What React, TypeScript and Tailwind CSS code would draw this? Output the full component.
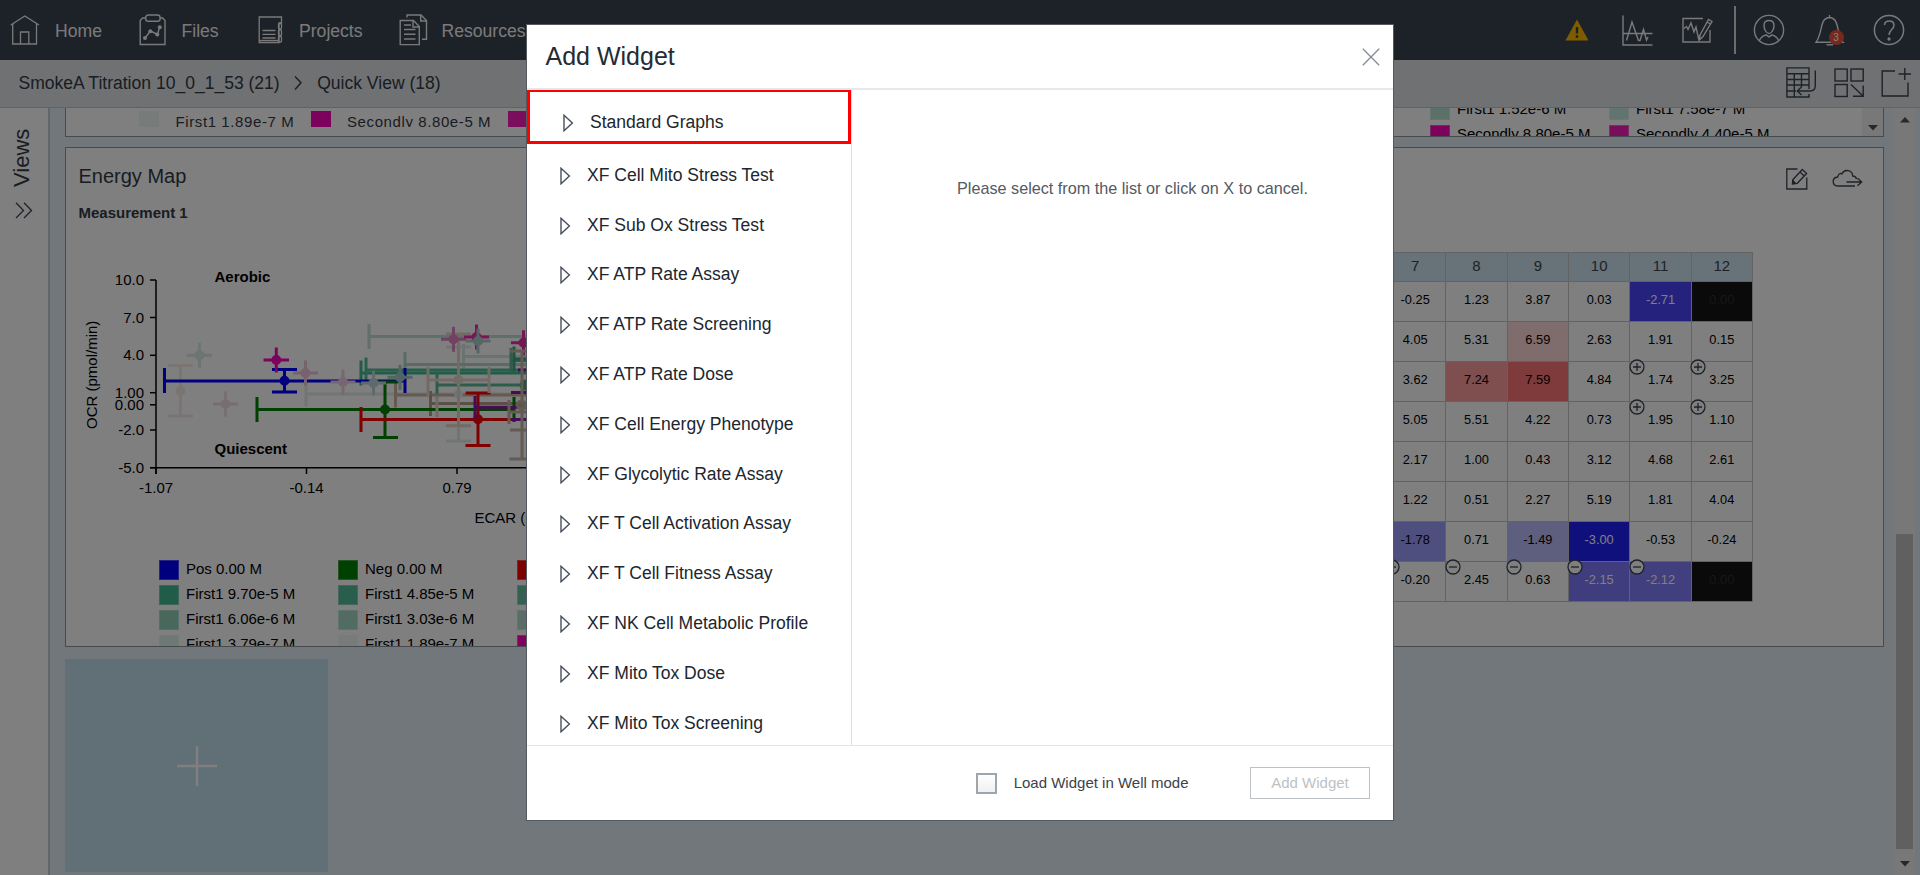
import React from "react";

const NAV_STROKE = "#f4f4f4";
const INK = "#3c4450";

function HomeIcon() {
  return (
    <svg width="30" height="30" viewBox="0 0 30 30" fill="none" stroke={NAV_STROKE} strokeWidth="1.3">
      <path d="M0.8 10 L14.8 1 L29 10" />
      <path d="M2.7 9 V29 H26.5 V9" />
      <path d="M10.5 29 V17 H18.8 V29" />
    </svg>
  );
}

function FilesIcon() {
  return (
    <svg width="28" height="32" viewBox="0 0 28 32" fill="none" stroke={NAV_STROKE} strokeWidth="1.4">
      <path d="M6.5 4 H3.5 L1.2 6.5 V30.5 H26 V6.5 L23.7 4 H21.2" />
      <rect x="6.7" y="1" width="14.4" height="6.3" rx="2.6" />
      <path d="M6 24 L11.5 17 L18.5 20.5 L20.5 13.5" />
      <g fill={NAV_STROKE} stroke="none">
        <circle cx="6" cy="24" r="2" />
        <circle cx="11.3" cy="17.2" r="2" />
        <circle cx="18.3" cy="20.5" r="2" />
        <circle cx="20.8" cy="13.2" r="2" />
      </g>
    </svg>
  );
}

function ProjectsIcon() {
  return (
    <svg width="25" height="28" viewBox="0 0 25 28" fill="none" stroke={NAV_STROKE} strokeWidth="1.3">
      <path d="M21 26.5 H1.2 V1 H23.5 V7 H21 V26.5 Z" />
      <path d="M1 24.5 H20" />
      <path d="M4.5 14.5 H17.5 M4.5 18.3 H17.5 M4.5 22 H17.5" />
      <rect x="20.5" y="7.5" width="3" height="5.5" rx="1" />
      <rect x="20.5" y="14" width="3" height="5.5" rx="1" />
      <rect x="20.5" y="20.5" width="3" height="5.5" rx="1" />
    </svg>
  );
}

function ResourcesIcon() {
  return (
    <svg width="29" height="32" viewBox="0 0 29 32" fill="none" stroke={NAV_STROKE} strokeWidth="1.4">
      <path d="M1.2 6.5 H14.5 L20.3 12.5 V30.6 H1.2 Z" />
      <path d="M14 6.5 V13 H20.3" />
      <path d="M5 11 H12 M5 15.5 H16.5 M5 20.3 H16.5 M5 25 H16.5" />
      <path d="M8 3.5 V1 H22 L27.5 6.5 V25.3 H23" />
      <path d="M21.7 1 V7 H27.5" />
    </svg>
  );
}

function SubTableIcon() {
  return (
    <svg width="31" height="31" viewBox="0 0 31 31" fill="none" stroke={INK} strokeWidth="1.4">
      <path d="M23 22 V0.9 H0.9 V30 H23 V27" />
      <path d="M1 6.8 H23 M1 12.5 H23 M1 18 H23 M1 24 H10 M8.3 7 V30 M15.5 7 V20" />
      <path d="M29.3 3.5 V18.5 C29.3 22.5 27.5 24 24 24 H11.5" />
      <path d="M15.5 20 L11.3 24 L15.5 28" />
    </svg>
  );
}

function SubGridIcon() {
  return (
    <svg width="31" height="30" viewBox="0 0 31 30" fill="none" stroke={INK} strokeWidth="1.4">
      <rect x="1" y="1" width="12.2" height="12" />
      <rect x="17" y="1" width="12.2" height="12" />
      <rect x="1" y="16.5" width="12.2" height="12" />
      <path d="M17 16.5 L29 28 M29.2 17.5 V28.3 H19" />
    </svg>
  );
}

function SubAddIcon() {
  return (
    <svg width="31" height="31" viewBox="0 0 31 31" fill="none" stroke={INK} strokeWidth="1.4">
      <path d="M14 4 H1.2 V29 H27 V15.5" />
      <path d="M23.8 1 V13 M17.5 7 H30" />
    </svg>
  );
}

const Y_TICKS: [string, number][] = [
  ["10.0", 280],
  ["7.0", 317.5],
  ["4.0", 355.3],
  ["1.00", 392.7],
  ["0.00", 404.8],
  ["-2.0", 430],
  ["-5.0", 467.7],
];
const X_TICKS: [string, number][] = [
  ["-1.07", 156],
  ["-0.14", 306.5],
  ["0.79", 457],
];

// Horizontal error bars that run off to the right: left cap x, y, colour.
const BARS: [number, number, string][] = [
  [306, 394, "#e2ebe8"],
  [369, 336.5, "#bfe0d6"],
  [463.5, 356.5, "#d3e8e1"],
  [405, 364.5, "#b2d6c9"],
  [361, 373, "#41b88e"],
  [366, 370, "#52bd97"],
  [437, 385, "#5cb998"],
  [511, 360.5, "#5cb998"],
  [514, 359, "#41a884"],
  [395.5, 395, "#cbb3a0"],
  [430.5, 403.5, "#b8a08d"],
];

const CROSSES: [number, number, string][] = [
  [199.5, 355.3, "#dbe9e8"],
  [305.5, 373, "#ecc6df"],
  [343, 382, "#edcfe3"],
  [225.5, 404, "#eedde8"],
  [400, 377.3, "#a5c8c6"],
  [373.5, 383, "#bdd5d6"],
  [453.5, 339.3, "#e285c4"],
  [476.5, 337, "#ee2cae"],
  [478, 341, "#a9cdcc"],
  [523.5, 342.7, "#ee2cae"],
];

function EnergyMapChart() {
  return (
    <svg
      className="block"
      width="461"
      height="310"
      viewBox="66 235 461 310"
      fontFamily='"Liberation Sans", Arial, sans-serif'
      fontSize="15"
    >
      <g strokeWidth="3">
        {BARS.map(([x, y, color], i) => (
          <path key={i} stroke={color} fill="none" d={`M${x} ${y} H560 M${x} ${y - 12.5} V${y + 12.5}`} />
        ))}
        <g stroke="#f4ebe5">
          <path d="M180.5 365.5 V416 M168 365.5 H193 M168 416 H193" />
          <circle cx="180.5" cy="391" r="3.5" fill="#f4ebe5" />
        </g>
        <g stroke="#0000ff">
          <path fill="none" d="M164.5 381 H405 M164.5 368 V393 M405 368 V393 M284.5 369.5 V392 M272 369.5 H297 M272 392 H297" />
          <circle cx="284.5" cy="380.7" r="3.5" fill="#0000ff" />
        </g>
        <g stroke="#008000">
          <path fill="none" d="M257 409.5 H514 M257 397 V422 M514 397 V422 M385 382 V437.5 M373 382 H398 M373 437.5 H398" />
          <circle cx="385" cy="409.5" r="3.5" fill="#008000" />
        </g>
        <g stroke="#ff0000">
          <path fill="none" d="M361 419.5 H560 M361 407 V432 M478 393 V445.5 M465.5 393 H490.5 M465.5 445.5 H490.5" />
          <circle cx="478" cy="419.3" r="3.5" fill="#ff0000" />
        </g>
        <path stroke="#8b18a8" fill="none" d="M475 407.3 H560 M475 396 V420 M511 419.5 H540 M511 392.5 H540 M518 370 H540" />
        <g stroke="#dfeae8">
          <path fill="none" d="M458.5 347 V441 M446 347 H471 M446 441 H471" />
          <circle cx="458.5" cy="394" r="3" fill="#dfeae8" />
        </g>
        <g stroke="#e2d7cd">
          <path fill="none" d="M458.5 334 V426 M446 334 H471 M446 425.7 H471 M428 380 H489 M428 367 V396 M489 367 V393 M437 396 V417" />
          <circle cx="458.5" cy="380" r="3.5" fill="#e2d7cd" />
        </g>
        {CROSSES.map(([x, y, color], i) => (
          <g key={i} stroke={color}>
            <path d={`M${x - 12.5} ${y} H${x + 12.5} M${x} ${y - 12.5} V${y + 12.5}`} />
            <circle cx={x} cy={y} r="3.5" fill={color} />
          </g>
        ))}
        <g stroke="#fa04bc">
          <path d="M263.5 360 H289 M276.3 347.5 V372.5" />
          <circle cx="276.3" cy="360" r="3.5" fill="#fa04bc" />
        </g>
        <circle cx="525" cy="385" r="4" fill="#4ba585" stroke="#4ba585" />
        <g stroke="#c4b4a6">
          <path fill="none" d="M522 351 V459 M510 351 H540 M510 430 H540 M509.5 459 H540 M509 400 V424 M509 412 H530" />
          <circle cx="521.5" cy="405" r="4" fill="#b8a898" />
        </g>
      </g>
      <g stroke="#000" strokeWidth="1.5">
        <path d="M156 280 V474 M150 467.7 H560" />
        {Y_TICKS.map(([t, y]) => (
          <path key={t} d={`M150 ${y} H156`} />
        ))}
        {X_TICKS.map(([t, x]) => (
          <path key={t} d={`M${x} 467.7 V474`} />
        ))}
      </g>
      <g fill="#000">
        {Y_TICKS.map(([t, y]) => (
          <text key={t} x="144" y={y + 5} textAnchor="end">
            {t}
          </text>
        ))}
        {X_TICKS.map(([t, x]) => (
          <text key={t} x={x} y="493" textAnchor="middle">
            {t}
          </text>
        ))}
        <text x="214.5" y="282" fontWeight="bold">
          Aerobic
        </text>
        <text x="214.5" y="454" fontWeight="bold">
          Quiescent
        </text>
        <text x="474.5" y="523">
          ECAR (mpH/min)
        </text>
        <text transform="translate(97 429) rotate(-90)">OCR (pmol/min)</text>
      </g>
    </svg>
  );
}

const LEGEND: [string, string][] = [
  ["#0000ff", "Pos 0.00 M"],
  ["#008000", "Neg 0.00 M"],
  ["#ff0000", ""],
  ["#41b88e", "First1 9.70e-5 M"],
  ["#54bd98", "First1 4.85e-5 M"],
  ["#68c4a4", ""],
  ["#90d0b9", "First1 6.06e-6 M"],
  ["#a4d8c6", "First1 3.03e-6 M"],
  ["#b4dccf", ""],
  ["#dcf0ea", "First1 3.79e-7 M"],
  ["#eef7f4", "First1 1.89e-7 M"],
  ["#ff04c0", ""],
];

function Swatch({ color, label }: { color: string; label: string }) {
  return (
    <div className="flex h-[25px] items-start">
      <div className="size-[20px] shrink-0 border border-white/30" style={{ backgroundColor: color }} />
      <span className="ml-[7px] text-[15px] leading-[18px] whitespace-nowrap text-black">{label}</span>
    </div>
  );
}

type Cell = { v: string; bg?: string; fg?: string; mark?: "+" | "-" };
const c = (v: string, bg?: string, fg?: string): Cell => ({ v, bg, fg });
const m = (v: string, mark: "+" | "-", bg?: string, fg?: string): Cell => ({ v, mark, bg, fg });

const ROWS: Cell[][] = [
  [c("-0.25"), c("1.23"), c("3.87"), c("0.03"), c("-2.71", "#4844fa", "#fff"), c("0.00", "#141414", "#303030")],
  [c("4.05"), c("5.31"), c("6.59", "#ffd8d8"), c("2.63"), c("1.91"), c("0.15")],
  [c("3.62"), c("7.24", "#ff9c9c"), c("7.59", "#ff7676"), c("4.84"), m("1.74", "+"), m("3.25", "+")],
  [c("5.05"), c("5.51"), c("4.22"), c("0.73"), m("1.95", "+"), m("1.10", "+")],
  [c("2.17"), c("1.00"), c("0.43"), c("3.12"), c("4.68"), c("2.61")],
  [c("1.22"), c("0.51"), c("2.27"), c("5.19"), c("1.81"), c("4.04")],
  [c("-1.78", "#9c9cff"), c("0.71"), c("-1.49", "#bcbcff"), c("-3.00", "#2020fa", "#fff"), c("-0.53"), c("-0.24")],
  [
    m("-0.20", "-"),
    m("2.45", "-"),
    m("0.63", "-"),
    m("-2.15", "-", "#7e7afc", "#fff"),
    m("-2.12", "-", "#847efc", "#fff"),
    c("0.00", "#141414", "#303030"),
  ],
];

function PlateTable() {
  return (
    <div className="mr-[130px] w-[369px] border-t border-l border-[#c6c6c6]">
      <div className="grid grid-cols-6">
        {["7", "8", "9", "10", "11", "12"].map((h) => (
          <div
            key={h}
            className="flex h-[29px] items-center justify-center border-r border-b border-[#c6c6c6] bg-[#cfe6f0] pb-[2px] text-[15px] text-[#3c4450]"
          >
            {h}
          </div>
        ))}
        {ROWS.flat().map((cell, i) => (
          <div
            key={i}
            className="relative flex h-[40px] items-center justify-center border-r border-b border-[#c6c6c6] pb-[4px] text-[12.8px] text-black"
            style={{ backgroundColor: cell.bg, color: cell.fg }}
          >
            {cell.v}
            {cell.mark && (
              <svg className="absolute -top-[3px] -left-[1.5px]" width="16" height="16" viewBox="0 0 16 16" fill="none" stroke={INK} strokeWidth="1.3">
                <circle cx="8" cy="8" r="7" fill="#fff" />
                <path d={cell.mark === "+" ? "M4 8 H12 M8 4 V12" : "M4 8 H12"} />
              </svg>
            )}
          </div>
        ))}
      </div>
    </div>
  );
}

function TopBar() {
  return (
    <header className="flex h-[60px] shrink-0 items-center bg-[#3a4350] text-[17.6px] text-[#f4f4f4]">
      <nav className="flex items-center">
        <div className="flex w-[128px] items-center pl-[10px]">
          <HomeIcon />
          <span className="ml-[15px] pt-[3px]">Home</span>
        </div>
        <div className="flex w-[119px] items-center pl-[10.5px]">
          <FilesIcon />
          <span className="ml-[15px] pt-[3px]">Files</span>
        </div>
        <div className="flex w-[141px] items-center pl-[10.5px]">
          <ProjectsIcon />
          <span className="ml-[16.5px] pt-[3px]">Projects</span>
        </div>
        <div className="flex items-center pl-[10.5px]">
          <ResourcesIcon />
          <span className="ml-[14px] pt-[3px]">Resources</span>
        </div>
      </nav>
      <div className="ml-auto flex items-center pr-[15.5px]">
        <svg className="mr-[33px]" width="24" height="22" viewBox="0 0 24 22">
          <path d="M12 0.5 L23.5 21.5 H0.5 Z" fill="#ffb800" />
          <path d="M10.8 8 H13.2 V14.5 H10.8 Z M10.8 16.3 H13.2 V18.7 H10.8 Z" fill="#394050" />
        </svg>
        <svg className="mr-[29px]" width="31" height="31" viewBox="0 0 31 31" fill="none" stroke={NAV_STROKE} strokeWidth="1.4">
          <path d="M1 0.5 V30 H30.5 M1 18.5 H30.5" />
          <path d="M4.5 25.5 L10 7 L16.5 25.5 H18 L21.5 14.5 L24.5 25 L26 22" />
        </svg>
        <svg className="mr-[21px]" width="31" height="28" viewBox="0 0 31 28" fill="none" stroke={NAV_STROKE} strokeWidth="1.4">
          <path d="M21 2.5 H1 V26 H28 V14" />
          <path d="M2 12.5 L4.5 10.5 L6 13.5 L9 7 L12 16 L14 11 L16.5 22.5 L18 19" />
          <path d="M18 19 L26.5 3.5 L30 5.5 L21 20.5 L17.2 24 Z M25 6 L28.5 8" />
        </svg>
        <div className="mr-[17px] h-[48px] w-[2px] bg-[#d8d8d8]" />
        <svg className="mr-[29.5px]" width="32" height="32" viewBox="0 0 32 32" fill="none" stroke={NAV_STROKE} strokeWidth="1.4">
          <circle cx="16" cy="16" r="14.6" />
          <path d="M16 6.5 C12.5 6.5 11 9 11 11.5 C11 15.5 13.5 19.5 16 19.5 C18.5 19.5 21 15.5 21 11.5 C21 9 19.5 6.5 16 6.5 Z" />
          <path d="M6.5 26.5 C7.5 23 10 21.8 13 20.8 L16 22.8 L19 20.8 C22 21.8 24.5 23 25.5 26.5" />
        </svg>
        <div className="relative mr-[28px] h-[32px] w-[30px]">
          <svg width="30" height="32" viewBox="0 0 30 32" fill="none" stroke={NAV_STROKE} strokeWidth="1.4">
            <path d="M14.5 3.5 V1 M1 28.3 C3 26.5 3.5 23 5 19 C7 13 6.5 4 14.5 3.5 C22.5 4 22 13 24 19 C25.5 23 26 26.5 28 28.3 Z" />
            <path d="M11.5 30.8 H18" />
          </svg>
          <span className="absolute top-[16px] left-[14px] flex size-[15px] items-center justify-center rounded-full bg-[#f0533c] text-[10px] leading-none text-white">
            3
          </span>
        </div>
        <svg width="32" height="32" viewBox="0 0 32 32" fill="none" stroke={NAV_STROKE} strokeWidth="1.5">
          <circle cx="16" cy="16" r="14.6" />
          <path d="M11.5 11 C11.5 5.5 21 5.5 21 11.3 C21 15.5 16 15.5 16 21" />
          <circle cx="16" cy="25" r="0.9" fill={NAV_STROKE} />
        </svg>
      </div>
    </header>
  );
}

function SubBar() {
  return (
    <div className="flex h-[48px] shrink-0 items-center border-b border-[#c0c4c8] bg-[#dfe2e6] pl-[18.5px] text-[17.55px] text-[#323a46]">
      <span>SmokeA Titration 10_0_1_53 (21)</span>
      <svg className="mb-[2px] ml-[13.5px]" width="10" height="16" viewBox="0 0 10 16" fill="none" stroke={INK} strokeWidth="1.5">
        <path d="M2 1.5 L8 7.8 L2 14.5" />
      </svg>
      <span className="ml-[14px]">Quick View (18)</span>
      <div className="mb-[2px] ml-auto flex items-center gap-[16.5px] pr-[8px]">
        <SubTableIcon />
        <SubGridIcon />
        <SubAddIcon />
      </div>
    </div>
  );
}

function Sidebar() {
  return (
    <aside className="flex w-[50px] shrink-0 flex-col items-center border-r-2 border-[#c4cdd3] bg-white pt-[19px] pr-[5px]">
      <span className="h-[60px] rotate-180 text-[22px] leading-[26px] text-[#323a46] [writing-mode:vertical-rl]">Views</span>
      <svg className="mt-[15px] ml-[5px]" width="18" height="17" viewBox="0 0 18 17" fill="none" stroke={INK} strokeWidth="1.3">
        <path d="M1 0.8 L8.5 8.5 L1 16 M9 0.8 L16.5 8.5 L9 16" />
      </svg>
    </aside>
  );
}

function UpperPanel() {
  return (
    <section className="flex h-[29px] w-[1819px] shrink-0 overflow-hidden border-x border-b border-[#8e969c] bg-white">
      <div className="mt-[3px] ml-[73px] flex h-[16px] overflow-hidden text-[15px] leading-[21px] tracking-[0.6px] whitespace-nowrap text-[#323a46]">
        <div className="w-[20px] bg-[#eef7f4]" />
        <span className="ml-[16.5px] w-[135.5px]">First1 1.89e-7 M</span>
        <div className="w-[20px] bg-[#fa04bc]" />
        <span className="ml-[16px] w-[161px]">Secondly 8.80e-5 M</span>
        <div className="w-[20px] bg-[#f41cb8]" />
      </div>
      <div className="-mt-[8px] ml-auto grid grid-cols-[179px_179px]">
        <Swatch color="#b4e0d0" label="First1 1.52e-6 M" />
        <Swatch color="#c4e8dc" label="First1 7.58e-7 M" />
        <Swatch color="#fa04bc" label="Secondly 8.80e-5 M" />
        <Swatch color="#f41cb8" label="Secondly 4.40e-5 M" />
      </div>
      <div className="ml-[74px] flex w-[21px] justify-center bg-[#f1f1f1] pt-[17px]">
        <svg width="10" height="6" viewBox="0 0 10 6">
          <path d="M0 0 H10 L5 5.5 Z" fill="#505050" />
        </svg>
      </div>
    </section>
  );
}

function EnergyPanel() {
  return (
    <section className="mt-[10px] flex h-[500px] w-[1819px] shrink-0 overflow-hidden border border-[#8e969c] bg-white">
      <div className="w-[461px] shrink-0 overflow-hidden">
        <div className="h-[87px] pt-[16px] pl-[12.5px]">
          <h2 className="text-[20px] leading-[24px] text-[#323a46]">Energy Map</h2>
          <p className="mt-[15px] text-[15px] leading-[20px] font-bold text-[#323a46]">Measurement 1</p>
        </div>
        <EnergyMapChart />
        <div className="mt-[15px] ml-[93px] grid w-[560px] grid-cols-[179px_179px_179px]">
          {LEGEND.map(([color, label], i) => (
            <Swatch key={i} color={color} label={label} />
          ))}
        </div>
      </div>
      <div className="flex flex-1 flex-col items-end">
        <div className="mt-[20px] mr-[20px] mb-[62px] flex h-[22px] gap-[24px]">
          <svg width="22" height="22" viewBox="0 0 22 22" fill="none" stroke={INK} strokeWidth="1.3">
            <path d="M11.5 1 H0.8 V21 H20.8 V9.5" />
            <path d="M7 11.5 L16.3 1.5 L20.6 5.5 L11.3 15.3 L6.5 15.7 Z M14 4 L18.3 8" />
            <path d="M6.5 15.7 L6.8 12.5 L9.6 15.4 Z" fill={INK} />
          </svg>
          <svg width="31" height="20" viewBox="0 0 31 20" fill="none" stroke={INK} strokeWidth="1.3">
            <path d="M23 18 H6.5 C-0.5 18 -0.5 9.5 5.8 9 C6 6 8.2 5 10 5.8 C12.5 0.5 20.5 2 20.7 8 C23 8 24.2 9.5 24.5 11" />
            <path d="M14.5 14 H29.5 M25.5 10.2 L29.7 14 L25.5 17.8" />
          </svg>
        </div>
        <PlateTable />
      </div>
    </section>
  );
}

function PageScrollbar() {
  return (
    <div className="mr-[5px] ml-auto flex w-[21px] shrink-0 flex-col items-center bg-[#f0f0f0]">
      <svg className="mt-[9px]" width="10" height="6" viewBox="0 0 10 6">
        <path d="M0 5.5 H10 L5 0 Z" fill="#505050" />
      </svg>
      <div className="mt-[411px] h-[315px] w-[17px] bg-[#c1c1c1]" />
      <svg className="mt-[12px]" width="10" height="6" viewBox="0 0 10 6">
        <path d="M0 0 H10 L5 5.5 Z" fill="#505050" />
      </svg>
    </div>
  );
}

const GROUPS = [
  "XF Cell Mito Stress Test",
  "XF Sub Ox Stress Test",
  "XF ATP Rate Assay",
  "XF ATP Rate Screening",
  "XF ATP Rate Dose",
  "XF Cell Energy Phenotype",
  "XF Glycolytic Rate Assay",
  "XF T Cell Activation Assay",
  "XF T Cell Fitness Assay",
  "XF NK Cell Metabolic Profile",
  "XF Mito Tox Dose",
  "XF Mito Tox Screening",
];

function Triangle() {
  return (
    <svg className="mt-[2px] shrink-0" width="11" height="18" viewBox="0 0 11 18" fill="none" stroke="#47505c" strokeWidth="1.4">
      <path d="M1 1.2 L9.4 9 L1 16.8 Z" />
    </svg>
  );
}

function AddWidgetDialog() {
  return (
    <div role="dialog" className="absolute top-[24px] left-[526px] flex h-[797px] w-[868px] flex-col border border-[#555a60] bg-white">
      <div className="flex h-[65px] shrink-0 items-center justify-between border-b-2 border-[#e5e9ec] pr-[13px] pl-[18.5px]">
        <h1 className="pb-[2px] text-[25px] leading-[30px] text-[#242b35]">Add Widget</h1>
        <svg width="18" height="18" viewBox="0 0 18 18" stroke="#868a96" strokeWidth="1.3">
          <path d="M0.8 0.8 L17.2 17.2 M17.2 0.8 L0.8 17.2" />
        </svg>
      </div>
      <div className="flex h-[655px] shrink-0 overflow-hidden">
        <div className="-mt-px flex w-[325px] shrink-0 flex-col border-r border-[#dcdfe2] text-[17.55px] text-[#20262e]">
          <div className="flex h-[55px] w-[324px] shrink-0 items-center border-[3px] border-[#ff0000] pt-[11px] pl-[33px]">
            <Triangle />
            <span className="ml-[16px]">Standard Graphs</span>
          </div>
          <div className="pt-[6px]">
            {GROUPS.map((g) => (
              <div key={g} className="flex h-[49.8px] items-center pl-[33px] whitespace-nowrap">
                <Triangle />
                <span className="ml-[16px]">{g}</span>
              </div>
            ))}
          </div>
        </div>
        <p className="flex-1 pt-[88px] pl-[20px] text-center text-[16.2px] leading-[20px] text-[#545a62]">
          Please select from the list or click on X to cancel.
        </p>
      </div>
      <div className="flex flex-1 items-center justify-end border-t border-[#e3e5e8] pr-[23px]">
        <div className="size-[21px] border-2 border-[#9da5ad] bg-linear-to-b from-white to-[#f0f0f0]" />
        <span className="ml-[16.5px] text-[15px] text-[#3c4249]">Load Widget in Well mode</span>
        <div className="ml-[61.5px] flex h-[32px] w-[120px] items-center justify-center border border-[#bcc2c6] text-[15px] text-[#bcc2c6]">
          Add Widget
        </div>
      </div>
    </div>
  );
}

export default function App() {
  return (
    <div className="relative flex h-[875px] w-[1920px] flex-col overflow-hidden bg-[#e3eef6] font-['Liberation_Sans',Arial,sans-serif]">
      <TopBar />
      <SubBar />
      <div className="flex min-h-0 flex-1">
        <Sidebar />
        <main className="flex flex-col overflow-hidden pl-[15px]">
          <UpperPanel />
          <EnergyPanel />
          <div className="mt-[12px] flex h-[213px] w-[263px] shrink-0 items-center justify-center bg-[#c3dfee]">
            <svg width="40" height="40" viewBox="0 0 40 40" stroke="#ffffff" strokeWidth="2.5">
              <path d="M20 0 V40 M0 20 H40" />
            </svg>
          </div>
        </main>
        <PageScrollbar />
      </div>
      <div className="absolute inset-0 bg-black/50" />
      <AddWidgetDialog />
    </div>
  );
}
